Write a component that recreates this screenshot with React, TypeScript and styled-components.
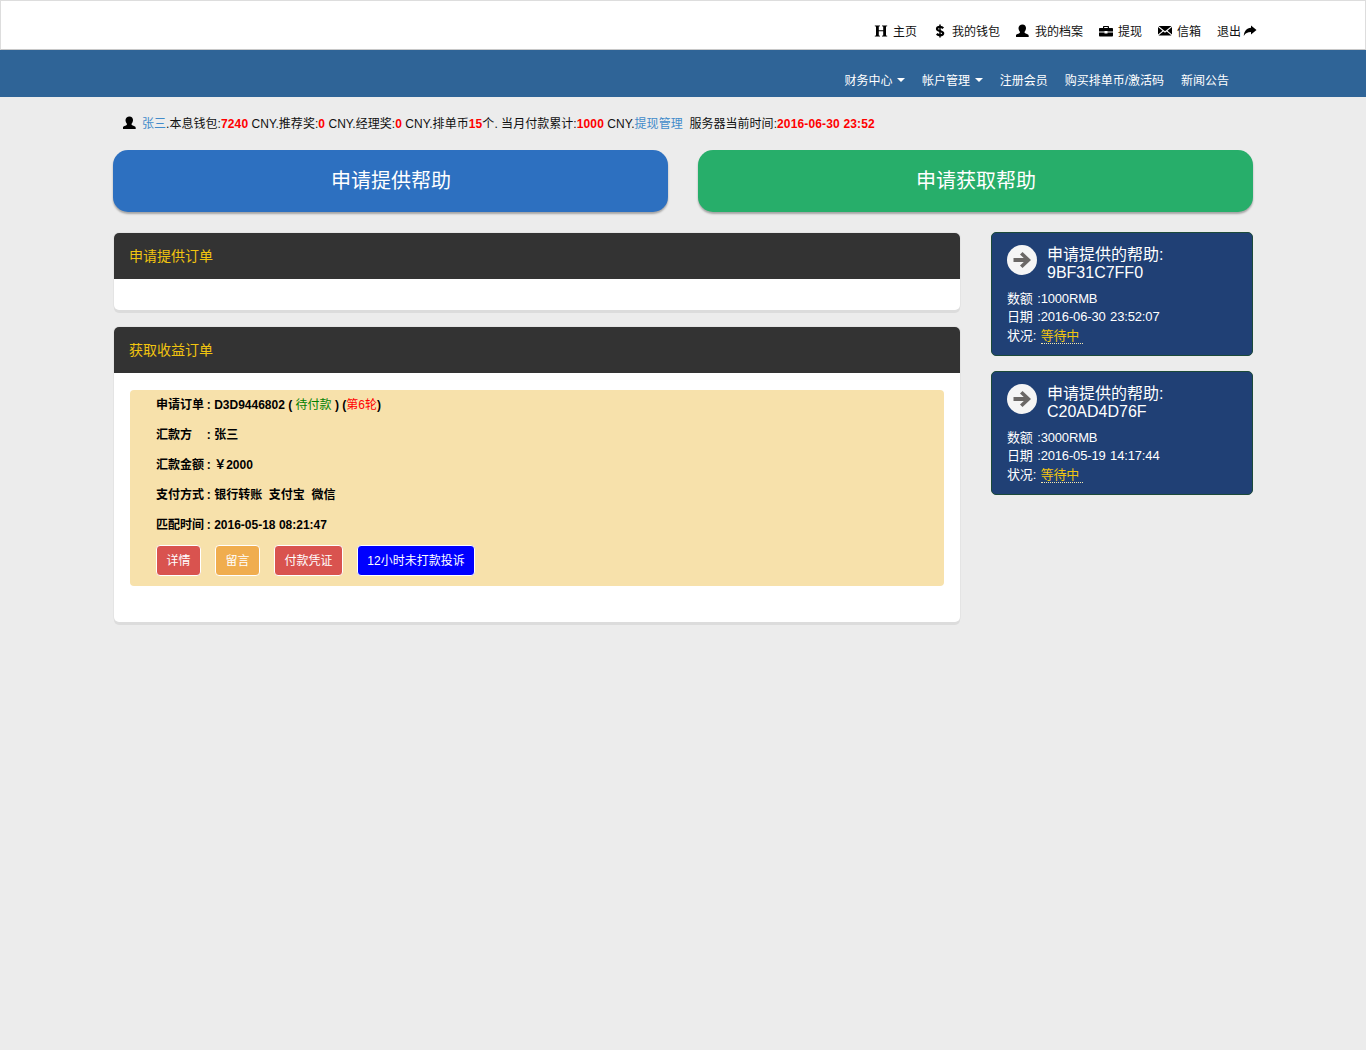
import React from "react";
import styled, { createGlobalStyle } from "styled-components";

const Global = createGlobalStyle`
  html, body { margin: 0; padding: 0; background: #ececec; }
  body {
    font-family: "Liberation Sans", "Noto Sans CJK SC", sans-serif;
    font-size: 12px;
    color: #000;
    min-height: 1050px;
  }
  * { box-sizing: border-box; }
`;

const TopBar = styled.header`
  height: 50px;
  background: #fff;
  border: 1px solid #ddd;
  border-bottom: 1px solid #c8c8c8;
  display: flex;
  justify-content: flex-end;
  align-items: flex-start;
  padding: 21px 108px 0 0;
`;
const TopLink = styled.a<{ $gap?: number }>`
  display: flex;
  align-items: center;
  height: 16px;
  margin-left: 16px;
  font-size: 12px;
  color: #111;
  gap: ${(p) => p.$gap ?? 5}px;
  svg {
    margin-top: 2px;
  }
`;
const NavBar = styled.nav`
  height: 47px;
  background: #2f6497;
  display: flex;
  justify-content: flex-end;
  align-items: flex-start;
  padding: 21px 137px 0 0;
`;
const NavLink = styled.a`
  display: flex;
  align-items: center;
  height: 16px;
  margin-left: 17px;
  font-size: 12px;
  color: #fff;
`;
const Caret = styled.span`
  display: inline-block;
  margin-left: 4.5px;
  margin-top: 2px;
  border-top: 4px solid #fff;
  border-left: 4px solid transparent;
  border-right: 4px solid transparent;
`;
const Page = styled.main`
  width: 1140px;
  margin-left: 113px;
`;
const Status = styled.div`
  height: 16px;
  line-height: 16px;
  margin-top: 19px;
  padding-left: 10px;
  white-space: pre;
  font-size: 12px;
  letter-spacing: 0.03px;
  color: #111;
`;
const StatusIcon = styled.span`
  display: inline-block;
  vertical-align: -2px;
  margin-right: 5px;
  height: 14px;
`;
const Red = styled.b`
  color: #f00;
  letter-spacing: 0.15px;
`;
const Blue = styled.a`
  color: #428bca;
`;
const Actions = styled.div`
  display: grid;
  grid-template-columns: 555px 555px;
  gap: 30px;
  margin-top: 18px;
`;
const BigButton = styled.button<{ $bg: string }>`
  height: 62px;
  border: 0;
  border-radius: 15px;
  background: ${(p) => p.$bg};
  color: #fff;
  font-family: inherit;
  font-size: 20px;
  box-shadow: 0 2px 2px rgba(0, 0, 0, 0.3);
  padding: 0 0 4px 1px;
`;
const Columns = styled.div`
  display: flex;
  align-items: flex-start;
  margin-top: 21px;
`;
const Left = styled.div`
  width: 846px;
  margin-left: 1px;
  display: flex;
  flex-direction: column;
  gap: 17px;
`;
const Right = styled.aside`
  width: 262px;
  margin-left: 31px;
  margin-top: -1px;
  display: flex;
  flex-direction: column;
  gap: 15px;
`;
const Panel = styled.section`
  background: #fff;
  border-radius: 5px;
  box-shadow: 0 3px 0 0 #dcdcdc, 0 0 0 1px #e4e4e4;
  overflow: hidden;
`;
const PanelHead = styled.h3`
  margin: 0;
  height: 46px;
  background: #333;
  color: #f1c40f;
  font-size: 14px;
  font-weight: 400;
  line-height: 46px;
  padding-left: 15px;
`;
const PanelBody = styled.div<{ $h: number }>`
  height: ${(p) => p.$h}px;
  padding: 17px 16px 0;
`;
const Order = styled.div`
  height: 196px;
  background: #f7e1ab;
  border-radius: 4px;
  padding: 0 26px;
`;
const OrderRow = styled.div`
  height: 30px;
  line-height: 30px;
  font-size: 12px;
  font-weight: 700;
  white-space: pre;
  color: #000;
`;
const OrderLabel = styled.span`
  display: inline-block;
  width: 47.5px;
`;
const Green = styled.span`
  color: #008000;
  font-weight: 400;
`;
const RedThin = styled.span`
  color: #f00;
  font-weight: 400;
`;
const Buttons = styled.div`
  display: flex;
  gap: 14px;
  margin-top: 5px;
`;
const SmallButton = styled.button<{ $bg: string; $w: number }>`
  width: ${(p) => p.$w}px;
  height: 31px;
  background: ${(p) => p.$bg};
  border: 1px solid #fff;
  border-radius: 4px;
  color: #fff;
  font-family: inherit;
  font-size: 12px;
  padding: 0 0 2px;
`;
const Card = styled.div`
  height: 124px;
  background: #204075;
  border: 1px solid #1c4a3a;
  border-radius: 5px;
  color: #fff;
  padding: 12px 15px 0;
`;
const CardHead = styled.div`
  display: flex;
  align-items: flex-start;
`;
const CircleIcon = styled.div`
  width: 30px;
  height: 30px;
  border-radius: 50%;
  background: #f5f5f5;
  display: flex;
  align-items: center;
  justify-content: center;
  flex: none;
  margin-right: 10px;
`;
const CardTitle = styled.div`
  font-size: 16px;
  line-height: 18px;
  margin-top: 1px;
`;
const CardLines = styled.div`
  margin-top: 8px;
  font-size: 13px;
  letter-spacing: -0.15px;
  word-spacing: 1px;
  line-height: 18.3px;
  white-space: pre;
`;
const Waiting = styled.span`
  color: #f1c40f;
  border-bottom: 1px dotted #f5e9b0;
  padding-right: 4px;
`;

const UserIcon = () => (
  <svg width="14" height="14" viewBox="0.5 0 14 14" fill="#000">
    <path d="M7 0.500c2.200 0 3.500 1.500 3.500 3.600 0 1.500-.6 2.900-1.400 3.600-.2.700 0 1.200.6 1.500 1.500.7 3.500 1.100 3.500 2.500V13H.3v-1.300c0-1.400 2-1.800 3.500-2.500.6-.3.8-.8.6-1.500C3.600 7 3 5.600 3 4.100 3 2 4.800.5 7 .5z" />
  </svg>
);
const HeaderIcon = () => (
  <svg width="14" height="14" viewBox="0 0 14 14" fill="#000">
    <path d="M.8 1.500h5.200v.8l-1.200.3v3.600h4.400V2.600L8 2.300v-.8h5.200v.8l-1.200.3v8.800l1.200.3v.8H8v-.8l1.200-.3V7.200H4.800v4.200l1.200.3v.8H.8v-.8l1.200-.3V2.600L.8 2.300z" />
  </svg>
);
const UsdIcon = () => (
  <svg width="14" height="14" viewBox="0 0 14 14" fill="none" stroke="#000">
    <path strokeWidth="2.200" d="M10.200 4.300C9.400 3.300 8.300 2.900 7 2.900 5.300 2.900 4 3.700 4 5c0 2.300 6.200 1.700 6.200 4.200 0 1.300-1.300 2-3.100 2-1.300 0-2.500-.5-3.400-1.300" />
    <path strokeWidth="1.500" d="M7 .6v12.800" />
  </svg>
);
const BriefcaseIcon = () => (
  <svg width="14" height="14" viewBox="0 0 14 14" fill="#000">
    <path d="M5 2h4c.5 0 1 .4 1 1v1h3c.6 0 1 .4 1 1v2.500H8.500V7h-3v.5H0V5c0-.6.4-1 1-1h3V3c0-.6.5-1 1-1zM5.200 3v1h3.600V3zM0 8.500h5.500V9.500h3v-1H14V11.500c0 .5-.4 1-1 1H1c-.6 0-1-.5-1-1z" />
  </svg>
);
const EnvelopeIcon = () => (
  <svg width="14" height="14" viewBox="0 0 14 14" fill="#000">
    <path d="M.5 2h13L7 7.300zM0 3l4.500 3.700L0 10.500zM14 3v7.500L9.500 6.700zM5.300 7.400 7 8.800l1.700-1.400 4.800 4H.5z" />
  </svg>
);
const ShareIcon = () => (
  <svg width="14" height="14" viewBox="0 0 14 14" fill="#000">
    <path d="M8 1.500 13.500 6 8 10.500V8C4.500 8 2.500 9 .8 12 1 7.500 3.500 4 8 3.800z" />
  </svg>
);
const ArrowIcon = () => (
  <svg width="20" height="20" viewBox="0 0 20 20" fill="#6b6866">
    <path d="M10.500 2 19 10l-8.500 8-2.500-2.400 3.800-3.600H1.500V8h10.300L8 4.400z" />
  </svg>
);

const top: [React.ReactNode, string][] = [
  [<HeaderIcon />, "主页"],
  [<UsdIcon />, "我的钱包"],
  [<UserIcon />, "我的档案"],
  [<BriefcaseIcon />, "提现"],
  [<EnvelopeIcon />, "信箱"],
];

const cards = [
  { id: "9BF31C7FF0", amt: "1000RMB", date: "2016-06-30 23:52:07" },
  { id: "C20AD4D76F", amt: "3000RMB", date: "2016-05-19 14:17:44" },
];

export default function App() {
  return (
    <>
      <Global />
      <TopBar>
        {top.map(([icon, label]) => (
          <TopLink key={label}>
            {icon}
            {label}
          </TopLink>
        ))}
        <TopLink $gap={2}>
          退出
          <ShareIcon />
        </TopLink>
      </TopBar>
      <NavBar>
        <NavLink>
          财务中心
          <Caret />
        </NavLink>
        <NavLink>
          帐户管理
          <Caret />
        </NavLink>
        <NavLink>注册会员</NavLink>
        <NavLink>购买排单币/激活码</NavLink>
        <NavLink>新闻公告</NavLink>
      </NavBar>
      <Page>
        <Status>
          <StatusIcon>
            <UserIcon />
          </StatusIcon>
          <Blue>张三</Blue>.本息钱包:<Red>7240</Red> CNY.推荐奖:<Red>0</Red> CNY.经理奖:<Red>0</Red> CNY.排单币
          <Red>15</Red>个. 当月付款累计:<Red>1000</Red> CNY.<Blue>提现管理</Blue>
          {"  "}服务器当前时间:
          <Red>2016-06-30 23:52</Red>
        </Status>
        <Actions>
          <BigButton $bg="#2d70c0">申请提供帮助</BigButton>
          <BigButton $bg="#27ae6a">申请获取帮助</BigButton>
        </Actions>
        <Columns>
          <Left>
            <Panel>
              <PanelHead>申请提供订单</PanelHead>
              <PanelBody $h={31} />
            </Panel>
            <Panel>
              <PanelHead>获取收益订单</PanelHead>
              <PanelBody $h={249}>
                <Order>
                  <OrderRow>
                    <OrderLabel>申请订单</OrderLabel> : D3D9446802 ( <Green>待付款</Green> ) (<RedThin>第6轮</RedThin>)
                  </OrderRow>
                  <OrderRow>
                    <OrderLabel>汇款方</OrderLabel> : 张三
                  </OrderRow>
                  <OrderRow>
                    <OrderLabel>汇款金额</OrderLabel> : ￥2000
                  </OrderRow>
                  <OrderRow>
                    <OrderLabel>支付方式</OrderLabel> : 银行转账{"  "}支付宝{"  "}微信
                  </OrderRow>
                  <OrderRow>
                    <OrderLabel>匹配时间</OrderLabel> : 2016-05-18 08:21:47
                  </OrderRow>
                  <Buttons>
                    <SmallButton $bg="#d9534f" $w={45}>
                      详情
                    </SmallButton>
                    <SmallButton $bg="#f0ad4e" $w={45}>
                      留言
                    </SmallButton>
                    <SmallButton $bg="#d9534f" $w={69}>
                      付款凭证
                    </SmallButton>
                    <SmallButton $bg="#0000ff" $w={118}>
                      12小时未打款投诉
                    </SmallButton>
                  </Buttons>
                </Order>
              </PanelBody>
            </Panel>
          </Left>
          <Right>
            {cards.map((c) => (
              <Card key={c.id}>
                <CardHead>
                  <CircleIcon>
                    <ArrowIcon />
                  </CircleIcon>
                  <CardTitle>
                    申请提供的帮助:
                    <br />
                    {c.id}
                  </CardTitle>
                </CardHead>
                <CardLines>
                  数额 :{c.amt}
                  <br />
                  日期 :{c.date}
                  <br />
                  状况: <Waiting>等待中</Waiting>
                </CardLines>
              </Card>
            ))}
          </Right>
        </Columns>
      </Page>
    </>
  );
}
